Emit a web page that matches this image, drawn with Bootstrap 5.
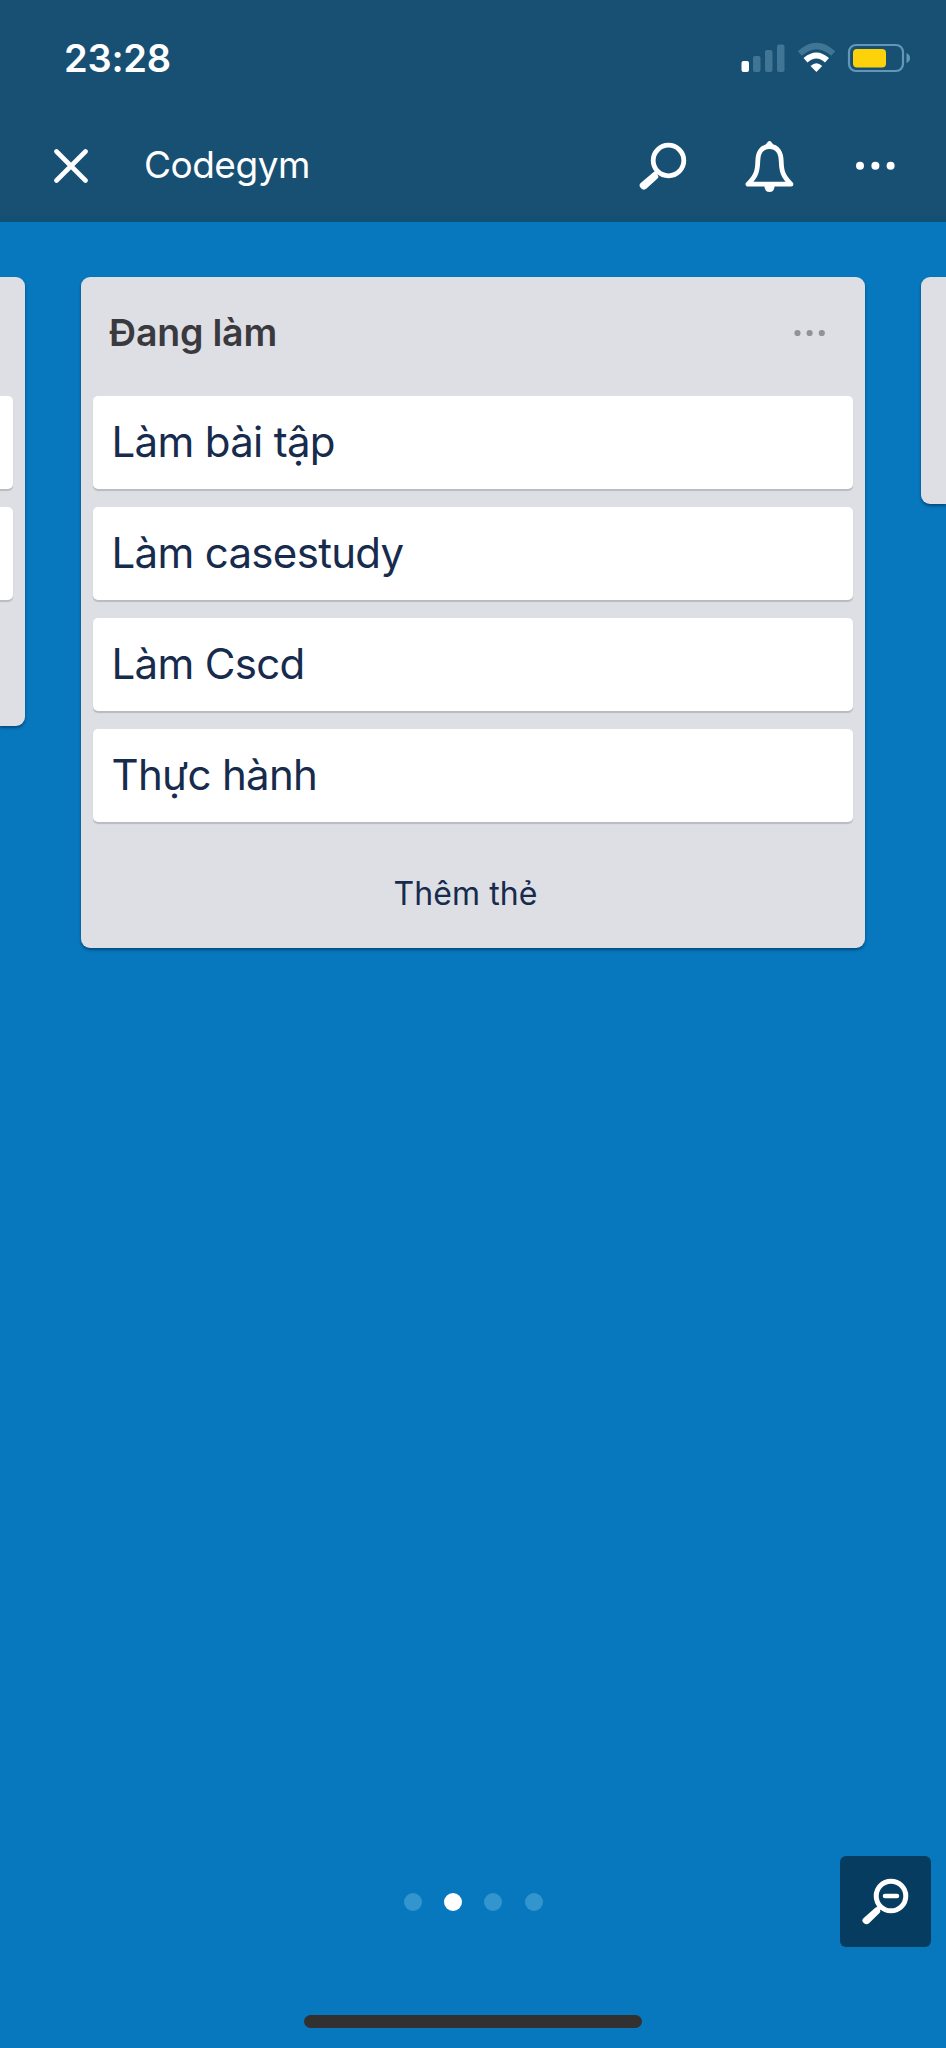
<!DOCTYPE html>
<html lang="vi">
<head>
<meta charset="utf-8">
<meta name="viewport" content="width=device-width, initial-scale=1">
<title>Codegym</title>
<link href="https://cdn.jsdelivr.net/npm/bootstrap@5.3.0/dist/css/bootstrap.min.css" rel="stylesheet">
<style>
  body { font-family: Inter, "Noto Sans", sans-serif; background: #0778be; color: #172b4d; }
  svg { display: block; flex: none; }
  .screen { height: 2048px; }
  .app-header { height: 222px; background: #185074; border-bottom: 5px solid #105073; }
  .status-bar { height: 116px; padding: 0 36px 0 64px; }
  .clock { font-size: 38px; font-weight: 600; line-height: 1; letter-spacing: -.2px; }
  .title-bar { height: 100px; padding: 0 51px 0 54px; }
  .board-name { font-size: 37px; line-height: 1; margin-left: 56px; padding-bottom: 4px; letter-spacing: -.5px; }
  .board { gap: 56px; padding-top: 55px; }
  .column-panel { background: #dedfe5; border-radius: 9px; padding: 0 12px; box-shadow: 0 2px 3px rgba(0,30,60,.5); }
  .column-main { width: 784px; height: 671px; }
  .column-prev { width: 25px; height: 449px; padding-left: 0; border-radius: 0 9px 9px 0; }
  .column-next { width: 25px; height: 227px; border-radius: 9px 0 0 9px; }
  .column-head { height: 119px; padding: 0 27px 7px 16px; }
  .column-title { font-size: 37.5px; font-weight: 600; line-height: 1; color: #3a3a3e; margin: 0; letter-spacing: -.2px; }
  .tasks { gap: 18px; }
  .task { height: 93px; background: #fff; border-radius: 5px; padding: 0 18px 1px 18.5px; font-size: 42px; line-height: 1; letter-spacing: -.68px; box-shadow: 0 2px 1px rgba(60,60,70,.22); }
  .column-prev .task { border-radius: 0 5px 5px 0; padding: 0; }
  .add-task { font-size: 32px; line-height: 1; height: 126px; padding: 18px 15px 0 0; color: #172b4d; letter-spacing: .1px; }
  .pager { gap: 22.4px; padding-left: 403.5px; }
  .pager span { width: 18px; height: 18px; border-radius: 50%; background: #3395cd; }
  .pager .current { background: #fff; }
  .footer-bar { height: 91px; padding-right: 15px; }
  .zoom-btn { width: 91px; height: 91px; background: #053c5f; border-radius: 6px; }
  .home-bar { width: 338px; height: 13px; background: #333032; margin: 67.5px 0 20.5px 304px; }
</style>
</head>
<body>
<div class="screen d-flex flex-column overflow-hidden">
  <header class="app-header text-white">
    <div class="status-bar d-flex align-items-center justify-content-between">
      <span class="clock">23:28</span>
      <svg width="170" height="32" viewBox="740 42 170 32">
        <rect x="741.5" y="61" width="7.5" height="11" rx="2" fill="#fff"/>
        <g fill="#417596"><rect x="753" y="56" width="7.5" height="16" rx="2"/><rect x="765" y="50" width="7.5" height="22" rx="2"/><rect x="777" y="44.5" width="7.5" height="27.5" rx="2"/></g>
        <path d="M799.8 53.5Q816.5 38.500 833.2 53.5" fill="none" stroke="#417596" stroke-width="6"/>
        <path d="M805.5 60.2Q816.5 50.800 827 60.2" fill="none" stroke="#fff" stroke-width="6"/>
        <path d="M810.5 66Q816.5 60.500 822.2 66L816.4 72Z" fill="#fff"/>
        <rect x="849" y="45" width="54" height="26" rx="7" fill="none" stroke="#6497b7" stroke-width="2.2"/>
        <rect x="853" y="49" width="33" height="18.5" rx="4" fill="#fdd20a"/>
        <path d="M906.5 53Q910 54.500 910 58T906.5 63Z" fill="#6497b7"/>
      </svg>
    </div>
    <div class="title-bar d-flex align-items-center">
      <svg width="34" height="34" viewBox="0 0 34 34"><path d="M2.500 2.500L31.500 31.500M31.500 2.500L2.500 31.500" stroke="#fff" stroke-width="4.6" stroke-linecap="round"/></svg>
      <span class="board-name">Codegym</span>
      <svg class="ms-auto" width="256" height="56" viewBox="639 138 256 56">
        <circle cx="668.5" cy="160.5" r="15.3" fill="none" stroke="#fff" stroke-width="4.8"/>
        <path d="M658 171L652 177" stroke="#fff" stroke-width="4.500"/>
        <path d="M652.500 173Q654 171.500 655.500 173L658 175.500Q659 177 657.500 178.500L646.500 188.500Q643.500 191 640.800 188T641 182.800Z" fill="#fff"/>
        <path d="M769.500 146.500C761 146.500 758 153.500 757.800 161C757.500 171 756.500 175.500 748 184.200H791C782.500 175.500 781.500 171 781.200 161C781 153.500 778 146.500 769.500 146.500Z" fill="none" stroke="#fff" stroke-width="4.800" stroke-linejoin="round"/>
        <path d="M765.500 145.500Q769.500 136.500 773.500 145.500Z" fill="#fff"/>
        <path d="M764.500 185H774.500V187Q774 192 769.500 192T764.500 187Z" fill="#fff"/>
        <g fill="#fff"><circle cx="860" cy="165.700" r="4"/><circle cx="875.400" cy="165.700" r="4"/><circle cx="890.600" cy="165.700" r="4"/></g>
      </svg>
    </div>
  </header>

  <main class="board d-flex align-items-start flex-grow-1">
    <section class="column-panel column-prev flex-shrink-0">
      <div class="column-head p-0"></div>
      <div class="tasks d-flex flex-column"><div class="task"></div><div class="task"></div></div>
    </section>
    <section class="column-panel column-main flex-shrink-0">
      <div class="column-head d-flex align-items-center justify-content-between">
        <h2 class="column-title">Đang làm</h2>
        <svg width="32" height="8" viewBox="0 0 32 8" fill="#929297"><circle cx="3.500" cy="4" r="3.100"/><circle cx="15.600" cy="4" r="3.100"/><circle cx="27.800" cy="4" r="3.100"/></svg>
      </div>
      <div class="tasks d-flex flex-column">
        <div class="task d-flex align-items-center"><span>Làm bài tập</span></div>
        <div class="task d-flex align-items-center"><span>Làm casestudy</span></div>
        <div class="task d-flex align-items-center"><span>Làm Cscd</span></div>
        <div class="task d-flex align-items-center"><span>Thực hành</span></div>
      </div>
      <div class="add-task d-flex align-items-center justify-content-center"><span>Thêm thẻ</span></div>
    </section>
    <section class="column-panel column-next flex-shrink-0"></section>
  </main>

  <footer>
    <div class="footer-bar d-flex align-items-center justify-content-between">
      <div class="pager d-flex"><span></span><span class="current"></span><span></span><span></span></div>
      <div class="zoom-btn d-flex align-items-center justify-content-center">
        <svg width="91" height="91" viewBox="840 1856 91 91">
          <circle cx="891" cy="1896" r="14.800" fill="none" stroke="#fff" stroke-width="5"/>
          <path d="M885 1896H897" stroke="#fff" stroke-width="4.500" stroke-linecap="round"/>
          <path d="M880.500 1906.500L875 1912" stroke="#fff" stroke-width="4.500"/>
          <path d="M875 1908Q876.500 1906.500 878 1908L880 1910Q881 1911.500 879.500 1913L869 1923.300Q866.500 1925.500 863.700 1923T863.700 1918Z" fill="#fff"/>
        </svg>
      </div>
    </div>
    <div class="home-bar rounded-pill"></div>
  </footer>
</div>
<script src="https://cdn.jsdelivr.net/npm/bootstrap@5.3.0/dist/js/bootstrap.bundle.min.js"></script>
</body>
</html>
